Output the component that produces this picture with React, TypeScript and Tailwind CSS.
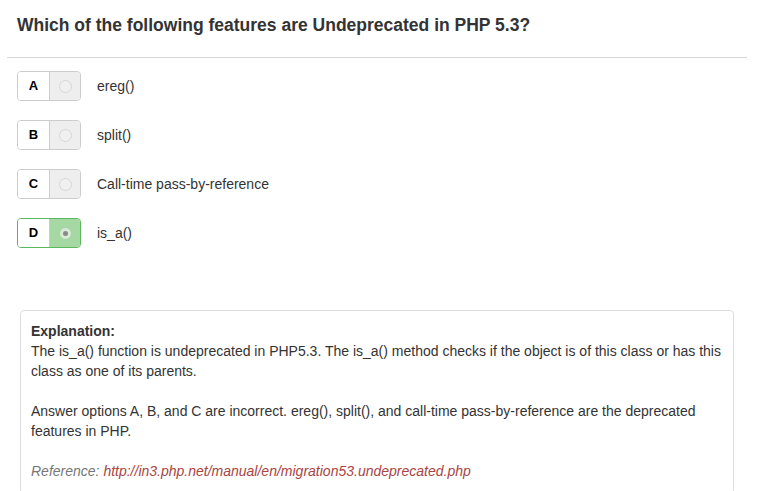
import React from 'react';

const options = [
  { letter: 'A', text: 'ereg()', selected: false },
  { letter: 'B', text: 'split()', selected: false },
  { letter: 'C', text: 'Call-time pass-by-reference', selected: false },
  { letter: 'D', text: 'is_a()', selected: true },
];

function Radio({ checked }: { checked: boolean }) {
  return (
    <span
      className={
        'flex h-[13px] w-[13px] items-center justify-center rounded-full border ' +
        (checked ? 'border-[#a9cfa6] bg-[#d6ebd4]' : 'border-[#d6d6d6] bg-[#f0f0f0]')
      }
    >
      {checked && <span className="h-[5px] w-[5px] rounded-full bg-[#8a8a8a]" />}
    </span>
  );
}

export default function App() {
  return (
    <div className="h-[491px] w-[758px] overflow-hidden bg-white text-[14px] text-[#333] [font-family:'Liberation_Sans',Arial,sans-serif]">
      <div className="px-[17px] pt-[14px] pb-[21px]">
        <h1 className="text-[17.5px] font-bold leading-[22px] text-[#333]">
          Which of the following features are Undeprecated in PHP 5.3?
        </h1>
      </div>
      <div className="mx-[7px] h-px w-[740px] bg-[#d6d6d6]" />

      <div className="flex flex-col gap-[19px] px-[17px] pt-[13px]">
        {options.map((o) => (
          <div key={o.letter} className="flex items-center">
            <div
              className={
                'flex h-[30px] overflow-hidden rounded-[4px] border ' +
                (o.selected ? 'border-[#5cb85c]' : 'border-[#ccc]')
              }
            >
              <div className="flex w-[32px] items-center justify-center border-r border-[#ccc] bg-white text-[13px] font-bold text-black">
                {o.letter}
              </div>
              <div
                className={
                  'flex w-[30px] items-center justify-center ' +
                  (o.selected ? 'bg-[#a6d8a3]' : 'bg-[#eee]')
                }
              >
                <Radio checked={o.selected} />
              </div>
            </div>
            <span className="ml-[16px]">{o.text}</span>
          </div>
        ))}
      </div>

      <div className="ml-[20px] mt-[62px] w-[714px] rounded-[4px] border border-[#ddd] px-[10px] pt-[10px] pb-[12px] leading-[20px]">
        <div className="font-bold">Explanation:</div>
        <p>
          The is_a() function is undeprecated in PHP5.3. The is_a() method checks if the object is of this class or has this
          class as one of its parents.
        </p>
        <p className="mt-[20px]">
          Answer options A, B, and C are incorrect. ereg(), split(), and call-time pass-by-reference are the deprecated
          features in PHP.
        </p>
        <p className="mt-[20px] italic text-[#777]">
          Reference: <span className="text-[#a94442]">http://in3.php.net/manual/en/migration53.undeprecated.php</span>
        </p>
      </div>
    </div>
  );
}
